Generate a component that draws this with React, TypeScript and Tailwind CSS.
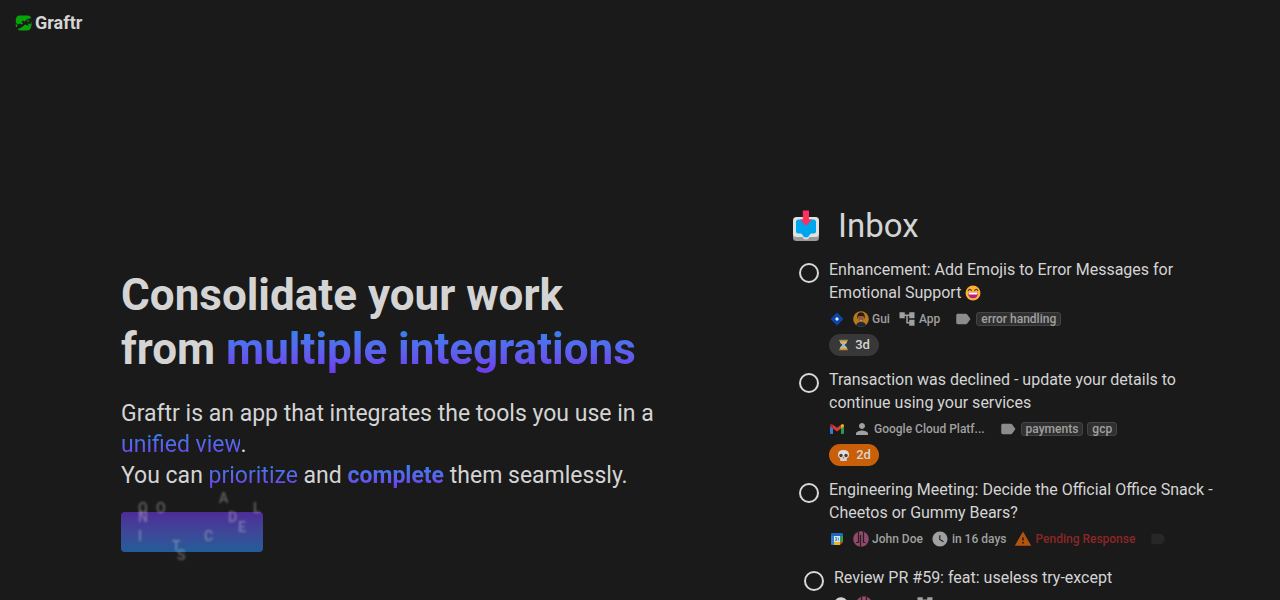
import type { ReactNode } from "react";
import { FaGithub } from "react-icons/fa";
import { MdAccountTree, MdLabel, MdPerson, MdWarning, MdWatchLater } from "react-icons/md";

const LogoMark = () => (
  <svg viewBox="0 0 17 16" className="h-4 w-[17px]" aria-hidden="true">
    <path d="M4 .5H13Q15.500.5 16.300 3.200L12.500 4 9.500 6.500 7.500 5.500 6.500 7 8 8.300 6.500 9.500 4.500 8.500 3 9.500Q.2 8 .8 4.500 1.500.8 4 .5Z" fill="#06a406" />
    <path d="M.6 8.500 2.500 10.300 1.800 12.500Q.4 11 .6 8.500Z" fill="#06a406" />
    <path d="M16.500 6.500Q17 10 15.800 13 14.800 15.500 12 15.500H5.500Q3.500 15.500 2.800 14L6.500 12.500 10 9.500 13.500 11 13 8.500 15.500 9Z" fill="#06a406" />
    <path d="M11.500 6 14 4.800 13.500 7Z" fill="#06a406" />
  </svg>
);

const InboxEmoji = () => (
  <svg viewBox="0 0 28 32" className="h-8 w-7 shrink-0" aria-hidden="true">
    <rect x="1" y="9" width="26" height="22" rx="3.500" fill="#9b9b9b" />
    <rect x="1" y="7" width="26" height="20" rx="3.500" fill="#e2e2e2" />
    <path d="M9.500 24H18.500L17 28Q14 31 11 28Z" fill="#e2e2e2" />
    <path d="M6.500 9.500H21.500Q24 9.500 24 12V21.500Q24 23.500 22 23.500H19.500Q18 23.500 17.500 25 16.500 27.500 14 27.500T10.500 25Q10 23.500 8.500 23.500H6Q4 23.500 4 21.500V12Q4 9.500 6.500 9.500Z" fill="#00a6ed" />
    <path d="M10.800.5H17V9.500H20L14 16 8 9.500H10.800Z" fill="#f8315f" />
  </svg>
);

const GrinEmoji = () => (
  <svg viewBox="0 0 16 16" className="inline-block size-4 align-[-3px]" role="img" aria-label="grinning">
    <circle cx="8" cy="8" r="7.500" fill="#fcb22f" />
    <path d="M3.300 5.500Q4.800 3 6.300 5.500M9.700 5.500Q11.200 3 12.700 5.500" fill="none" stroke="#402a32" strokeWidth="1.100" strokeLinecap="round" />
    <path d="M3 7.500H13Q13 13.300 8 13.300T3 7.500Z" fill="#bb1d80" />
    <path d="M3.500 7.500H12.500V8.500Q12.500 9.500 11.500 9.500H4.500Q3.500 9.500 3.500 8.500Z" fill="#fff" />
  </svg>
);

const Hourglass = () => (
  <svg viewBox="0 0 12 14" className="h-3 w-[11px]" aria-hidden="true">
    <path d="M2 2H10V4.500L7.200 7 10 9.500V12H2V9.500L4.800 7 2 4.500Z" fill="#8fc3df" />
    <path d="M3 3.500H9L6 6.500ZM6 8.500 9 12H3Z" fill="#f9a72b" />
    <path d="M1 1H11V2.500H1ZM1 11.500H11V13H1Z" fill="#c98a2c" />
  </svg>
);

const Skull = () => (
  <svg viewBox="0 0 14 14" className="size-[13px]" aria-hidden="true">
    <path d="M7 1Q13 1 13 6.500 13 9 10.500 10V12Q10.500 13 9.500 13H4.500Q3.500 13 3.500 12V10Q1 9 1 6.500 1 1 7 1Z" fill="#e4dada" />
    <circle cx="4.300" cy="7" r="1.800" fill="#433b3b" />
    <circle cx="9.700" cy="7" r="1.800" fill="#433b3b" />
    <path d="M7 8.500 7.800 10H6.200ZM5.500 11.500V13M8.500 11.500V13" fill="#433b3b" stroke="#8b7f7f" strokeWidth=".4" />
  </svg>
);

const JiraIcon = () => (
  <svg viewBox="0 0 16 16" className="size-4" aria-hidden="true">
    <path d="M8 1.500 14.500 8 8 14.500 1.500 8Z" fill="#0b47a8" />
    <path d="M8 6 10 8 8 10 6 8Z" fill="#e6ecf5" />
  </svg>
);

const GmailIcon = () => (
  <svg viewBox="0 0 16 16" className="size-4" aria-hidden="true">
    <path d="M1 4.500 4 6.500V13H2Q1 13 1 12Z" fill="#3b76d6" />
    <path d="M12 6.500 15 4.500V12Q15 13 14 13H12Z" fill="#2b9a4a" />
    <path d="M4 3.800 8 6.800 12 3.800V7.500L8 10.500 4 7.500Z" fill="#d53a2f" />
    <path d="M1 4.500Q1 3 2.500 3L4 3.800V7.500L1 5.500Z" fill="#b5271f" />
    <path d="M15 4.500Q15 3 13.500 3L12 3.800V7.500L15 5.500Z" fill="#e9b106" />
  </svg>
);

const CalendarIcon = () => (
  <svg viewBox="0 0 16 16" className="size-4" aria-hidden="true">
    <path d="M2 3Q2 2 3 2H13Q14 2 14 3V5H2Z" fill="#1c69b8" />
    <path d="M2 5H5V14H3Q2 14 2 13Z" fill="#2f7fd0" />
    <path d="M11 5H14V11H11Z" fill="#329a4e" />
    <path d="M5 11H11V14H5Z" fill="#e9b51c" />
    <path d="M11 11H14L11 14Z" fill="#d54535" />
    <path d="M5 5H11V11H5Z" fill="#dbe4ec" />
    <path d="M6 6.500H7.500V9.500H6M6.500 8H7.500M9.300 6.500V9.800" fill="none" stroke="#3c78b8" strokeWidth=".8" />
  </svg>
);

const GuiAvatar = () => (
  <svg viewBox="0 0 16 16" className="size-4" aria-hidden="true">
    <clipPath id="gui"><circle cx="8" cy="8" r="7.800" /></clipPath>
    <g clipPath="url(#gui)">
      <rect width="16" height="16" fill="#b67a1c" />
      <path d="M3 16Q3 11 8 11T13.500 16Z" fill="#1c2a33" />
      <ellipse cx="8" cy="7" rx="2.600" ry="3.800" fill="#94583e" />
      <path d="M4.300 8Q3.500 1.300 8 1.300T11.700 8L10.300 5H5.800Z" fill="#2a1a16" />
      <path d="M6.800 9H9.200L8 9.900Z" fill="#e2cbbd" />
    </g>
  </svg>
);

const PinkAvatar = () => (
  <svg viewBox="0 0 16 16" className="size-4" aria-hidden="true">
    <clipPath id="pink"><circle cx="8" cy="8" r="7.800" /></clipPath>
    <g clipPath="url(#pink)">
      <rect width="16" height="16" fill="#8f4a6c" />
      <path d="M5.500 0V11.500H3M7.500 4V16M10.500 0V11.500H12.500" fill="none" stroke="#2a1a22" strokeWidth="1.200" />
    </g>
  </svg>
);

interface MetaProps {
  icon: ReactNode;
  children?: ReactNode;
  className?: string;
}

const Meta = ({ icon, children, className = "text-[#a0a0a0]" }: MetaProps) => (
  <span className={`flex items-center gap-[3px] ${className}`}>
    {icon}
    {children}
  </span>
);

const Tags = ({ names }: { names: string[] }) => (
  <span className="ml-1.5 flex items-center gap-1">
    <MdLabel className="size-[18px] text-[#8c8c8c]" />
    {names.map((name) => (
      <span key={name} className="rounded-[3px] border border-[#444] bg-[#303030] px-1 leading-3 text-[#a0a0a0]">
        {name}
      </span>
    ))}
  </span>
);

interface TaskProps {
  id: string;
  title: ReactNode;
  meta: ReactNode;
  due?: ReactNode;
  className?: string;
}

const Task = ({ id, title, meta, due, className = "pl-[7px]" }: TaskProps) => (
  <li className={`flex items-start gap-2.5 pb-3 ${className}`}>
    <input
      id={id}
      type="checkbox"
      className="mt-[5px] size-5 shrink-0 appearance-none rounded-full border-2 border-[#d8d8d8] checked:bg-[#d8d8d8]"
    />
    <div className="min-w-0">
      <label htmlFor={id} className="block text-base leading-[23px] text-[#d4d4d4]">
        {title}
      </label>
      <div className="flex h-[30px] items-center gap-2 text-xs font-medium whitespace-nowrap">{meta}</div>
      {due}
    </div>
  </li>
);

const Accent = ({ children }: { children: ReactNode }) => (
  <span className="bg-linear-to-b from-[#128aee] to-[#7034ec] bg-clip-text text-transparent">{children}</span>
);

// Loose letters that drift over the button
const letters = [
  { char: "O", left: 17, top: -12 },
  { char: "N", left: 17, top: -3 },
  { char: "O", left: 35, top: -12 },
  { char: "I", left: 17, top: 16 },
  { char: "T", left: 51, top: 26 },
  { char: "S", left: 56, top: 35 },
  { char: "C", left: 83, top: 16 },
  { char: "A", left: 98, top: -22 },
  { char: "D", left: 107, top: -3 },
  { char: "E", left: 117, top: 7 },
  { char: "L", left: 132, top: -12 },
];

export default function App() {
  return (
    <div className="h-screen overflow-hidden bg-[#1a1a1a] font-['Roboto',sans-serif] text-[#d4d4d4]">
      <header className="flex h-[46px] items-center px-[15px]">
        <a href="#" className="flex items-center gap-[3px]">
          <LogoMark />
          <span className="text-lg leading-5 font-bold">Graftr</span>
        </a>
      </header>

      <main className="flex items-start justify-between gap-10 pt-40 pr-16 pl-[121px]">
        <section className="max-w-[560px] flex-1 pt-[62px]">
          <h1 className="text-[44px] leading-[54px] font-bold">
            Consolidate your work
            <br />
            from <Accent>multiple integrations</Accent>
          </h1>
          <p className="mt-[22px] text-[23px] leading-[31px]">
            Graftr is an app that integrates the tools you use in a <Accent>unified view</Accent>.
            <br />
            You can <Accent>prioritize</Accent> and <b><Accent>complete</Accent></b> them seamlessly.
          </p>
          <button className="relative mt-[21px] block h-10 w-[142px] rounded bg-linear-to-b from-[#4c2c98] to-[#205c98]">
            {letters.map(({ char, left, top }, i) => (
              <span
                key={i}
                className="absolute text-sm leading-4 font-medium text-[#d4d4d4] opacity-40 blur-[1px]"
                style={{ left, top }}
              >
                {char}
              </span>
            ))}
          </button>
        </section>

        <section className="w-[424px] shrink-0">
          <h2 className="flex h-10 items-center gap-[18px] text-[33px]">
            <InboxEmoji />
            Inbox
          </h2>
          <ul className="pt-3">
            <Task
              id="emojis"
              title={<>Enhancement: Add Emojis to Error Messages for Emotional Support <GrinEmoji /></>}
              meta={
                <>
                  <Meta icon={<JiraIcon />} />
                  <Meta icon={<GuiAvatar />}>Gui</Meta>
                  <Meta icon={<MdAccountTree className="size-[18px]" />}>App</Meta>
                  <Tags names={["error handling"]} />
                </>
              }
              due={
                <span className="flex h-[22px] w-[50px] items-center justify-center gap-1.5 rounded-full bg-[#383838] text-[13px] font-medium">
                  <Hourglass />
                  3d
                </span>
              }
            />
            <Task
              id="declined"
              title="Transaction was declined - update your details to continue using your services"
              meta={
                <>
                  <Meta icon={<GmailIcon />} />
                  <Meta icon={<MdPerson className="size-[18px]" />}>Google Cloud Platf...</Meta>
                  <Tags names={["payments", "gcp"]} />
                </>
              }
              due={
                <span className="flex h-[22px] w-[50px] items-center justify-center gap-1.5 rounded-full bg-[#c95f09] text-[13px] font-medium">
                  <Skull />
                  2d
                </span>
              }
            />
            <Task
              id="snack"
              title="Engineering Meeting: Decide the Official Office Snack - Cheetos or Gummy Bears?"
              meta={
                <>
                  <Meta icon={<CalendarIcon />} />
                  <Meta icon={<PinkAvatar />}>John Doe</Meta>
                  <Meta icon={<MdWatchLater className="size-[18px]" />}>in 16 days</Meta>
                  <Meta icon={<MdWarning className="size-[18px] text-[#b6540c]" />} className="text-[#8c2626]">
                    Pending Response
                  </Meta>
                  <MdLabel className="ml-1.5 size-[18px] text-[#272727]" />
                </>
              }
            />
            <Task
              id="review"
              className="pl-3"
              title="Review PR #59: feat: useless try-except"
              meta={
                <>
                  <Meta icon={<FaGithub className="size-3.5 text-[#d4d4d4]" />} />
                  <Meta icon={<PinkAvatar />} />
                  <MdAccountTree className="ml-9 size-[18px] text-[#a0a0a0]" />
                </>
              }
            />
          </ul>
        </section>
      </main>
    </div>
  );
}
